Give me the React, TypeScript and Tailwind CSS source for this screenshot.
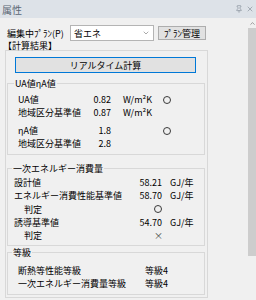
import { ChevronDown, ChevronUp, Pin, X } from "lucide-react";

const font = { fontFamily: '"Noto Sans CJK JP", "Noto Sans", sans-serif' };

function Circle() {
  return <span className="block w-[8px] h-[8px] rounded-full border border-[#3a3a3a]" />;
}

export default function App() {
  return (
    <div className="w-[256px] h-[300px] bg-[#f0f0f0] overflow-hidden text-black text-[9px] leading-[11px]" style={font}>
      {/* Title bar */}
      <div className="h-[18px] bg-[#dde2e8] flex items-center pl-[2px] pr-[2px]">
        <span className="text-[#5b6775] text-[10px]">属性</span>
        <div className="ml-auto flex items-center gap-[3px] text-[#6b7580]">
          <Pin size={8} strokeWidth={1.5} />
          <X size={8} strokeWidth={1.5} />
        </div>
      </div>

      <div className="flex h-[282px]">
        <div className="w-[246px]">
          {/* Plan row */}
          <div className="flex items-center h-[16px] mt-[7px] pl-[7px]">
            <span className="w-[63px]">編集中ﾌﾟﾗﾝ(P)</span>
            <div className="w-[84px] h-[16px] bg-white border border-[#b4b4b4] flex items-center pl-[3px] pr-[3px]">
              <span>省エネ</span>
              <ChevronDown size={8} strokeWidth={1.5} className="ml-auto text-[#555]" />
            </div>
            <button className="ml-[4px] w-[48px] h-[14px] bg-[#e1e1e1] border border-[#adadad] flex items-center justify-center text-[9px] leading-[11px]">
              ﾌﾟﾗﾝ管理
            </button>
          </div>

          <div className="pl-[3px] h-[9px] leading-[9px]">【計算結果】</div>

          {/* Outer box */}
          <div className="ml-[5px] w-[203px] h-[248px] border border-[#d8d8d8] pt-[6px]">
            <button className="ml-[9px] w-[181px] h-[16px] bg-[#e1e1e1] border border-[#0078d7] flex items-center justify-center text-[9px] leading-[11px]">
              リアルタイム計算
            </button>

            {/* UA group */}
            <fieldset className="ml-[1px] mt-[5px] w-[198px] h-[77px] border border-[#d8d8d8]">
              <legend className="ml-[6px] px-[1px] leading-[11px]">UA値ηA値</legend>
              <div className="pl-[10px] pt-[4px]">
                <div className="flex items-center h-[13px]">
                  <span className="w-[70px]">UA値</span>
                  <span className="w-[23px] text-right">0.82</span>
                  <span className="ml-[12px] w-[40px]">W/m²K</span>
                  <Circle />
                </div>
                <div className="flex items-center h-[13px]">
                  <span className="w-[70px]">地域区分基準値</span>
                  <span className="w-[23px] text-right">0.87</span>
                  <span className="ml-[12px] w-[40px]">W/m²K</span>
                </div>
                <div className="flex items-center h-[13px] mt-[5px]">
                  <span className="w-[70px]">ηA値</span>
                  <span className="w-[23px] text-right">1.8</span>
                  <span className="ml-[12px] w-[40px]" />
                  <Circle />
                </div>
                <div className="flex items-center h-[13px]">
                  <span className="w-[70px]">地域区分基準値</span>
                  <span className="w-[23px] text-right">2.8</span>
                </div>
              </div>
            </fieldset>

            {/* Primary energy group */}
            <fieldset className="ml-[1px] mt-[8px] w-[198px] h-[83px] border border-[#d8d8d8]">
              <legend className="ml-[4px] px-[1px] leading-[11px]">一次エネルギー消費量</legend>
              <div className="pl-[6px] pt-[2px]">
                <div className="flex items-center h-[13px]">
                  <span className="w-[120px]">設計値</span>
                  <span className="w-[28px] text-right">58.21</span>
                  <span className="ml-[8px]">GJ/年</span>
                </div>
                <div className="flex items-center h-[13px]">
                  <span className="w-[120px]">エネルギー消費性能基準値</span>
                  <span className="w-[28px] text-right">58.70</span>
                  <span className="ml-[8px]">GJ/年</span>
                </div>
                <div className="flex items-center h-[14px]">
                  <span className="w-[120px] pl-[10px]">判定</span>
                  <span className="ml-[20px]">
                    <Circle />
                  </span>
                </div>
                <div className="flex items-center h-[13px]">
                  <span className="w-[120px]">誘導基準値</span>
                  <span className="w-[28px] text-right">54.70</span>
                  <span className="ml-[8px]">GJ/年</span>
                </div>
                <div className="flex items-center h-[13px]">
                  <span className="w-[120px] pl-[10px]">判定</span>
                  <span className="ml-[20px] w-[8px] text-center text-[#444]">×</span>
                </div>
              </div>
            </fieldset>

            {/* Grade group */}
            <fieldset className="ml-[1px] mt-[1px] w-[198px] h-[48px] border border-[#d8d8d8]">
              <legend className="ml-[4px] px-[1px] leading-[11px]">等級</legend>
              <div className="pl-[10px] pt-[6px]">
                <div className="flex items-center h-[13px]">
                  <span className="w-[127px]">断熱等性能等級</span>
                  <span>等級4</span>
                </div>
                <div className="flex items-center h-[13px]">
                  <span className="w-[127px]">一次エネルギー消費量等級</span>
                  <span>等級4</span>
                </div>
              </div>
            </fieldset>
          </div>
        </div>

        {/* Scrollbar */}
        <div className="w-[10px] flex flex-col">
          <div className="h-[10px] flex items-center justify-center pl-[2px] text-[#606060]">
            <ChevronUp size={7} strokeWidth={2} />
          </div>
          <div className="ml-[2px] h-[228px] bg-[#cdcdcd]" />
        </div>
      </div>
    </div>
  );
}
